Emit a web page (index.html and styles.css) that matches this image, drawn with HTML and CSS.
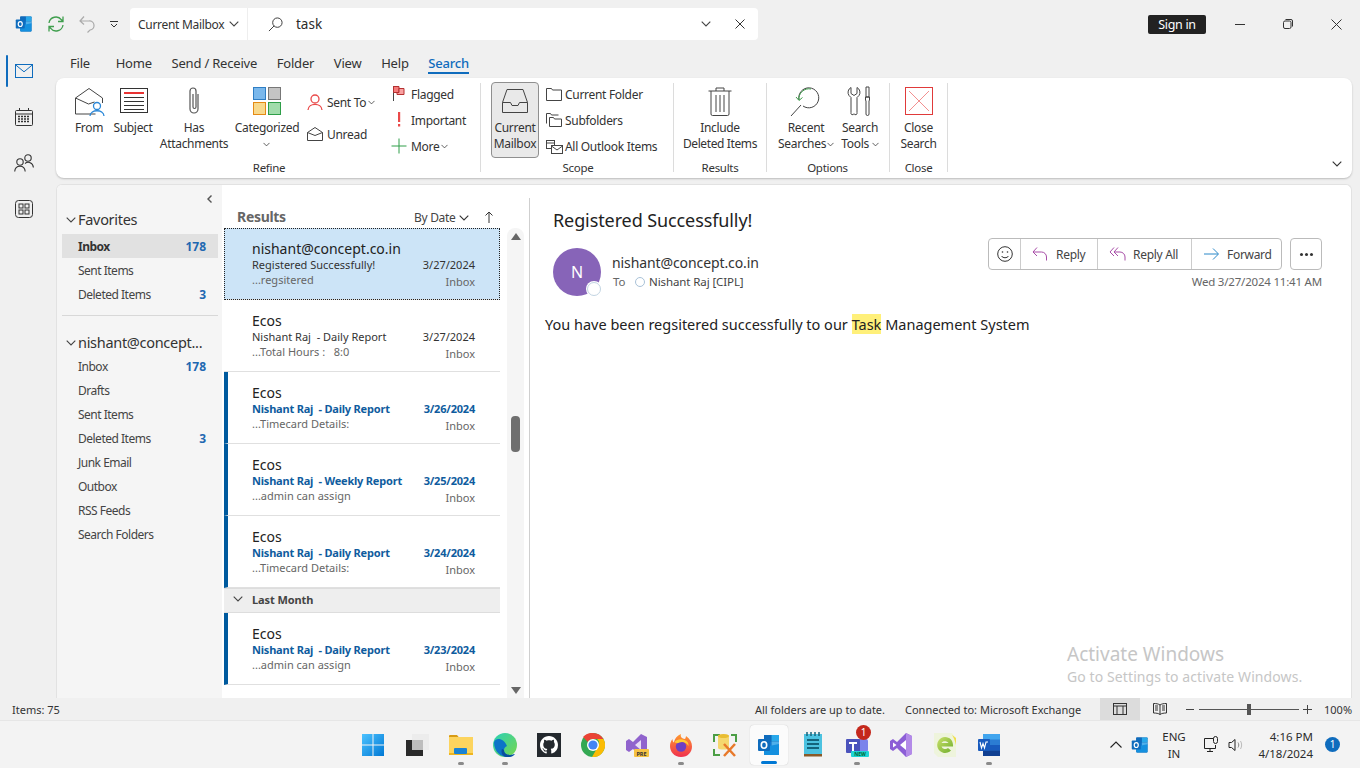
FILE: index.html
```html
<!DOCTYPE html>
<html lang="en">
<head>
<meta charset="utf-8">
<title>Outlook search</title>
<link rel="stylesheet" href="styles.css">
</head>
<body>
<svg class="sprites" aria-hidden="true">
  <symbol id="chev" viewBox="0 0 10 6"><path d="M.7.7 5 5 9.3.7" fill="none" stroke="currentColor" stroke-width="1.1"/></symbol>
  <symbol id="outlook" viewBox="0 0 24 24">
    <rect x="7" y="2" width="15" height="20" rx="1" fill="#0a5ca8"/>
    <rect x="7" y="2" width="7.5" height="6.5" fill="#0f6cbd"/><rect x="14.5" y="2" width="7.5" height="6.5" fill="#28a8ea"/>
    <rect x="7" y="8.5" width="7.5" height="6.5" fill="#0f78d4"/><rect x="14.5" y="8.5" width="7.5" height="6.5" fill="#50b0ea"/>
    <path d="M7 14 22 11v10a1 1 0 0 1-1 1H8a1 1 0 0 1-1-1z" fill="#1490df"/>
    <rect x="1" y="6" width="12" height="12" rx="1" fill="#0f6cbd"/>
    <ellipse cx="7" cy="12" rx="2.7" ry="3.3" fill="none" stroke="#fff" stroke-width="1.6"/>
  </symbol>
</svg>
<div class="app">
  <header class="titlebar">
    <svg class="t-outlook" width="18" height="18"><use href="#outlook"/></svg>
    <svg class="t-sync" width="18" height="18" viewBox="0 0 18 18" fill="none" stroke="#3f9e4d" stroke-width="1.3"><path d="M2 8a7 7 0 0 1 12.5-3.2L16 6.500M16 1.500v5h-5M16 10a7 7 0 0 1-12.500 3.200L2 11.500M2 16.500v-5h5"/></svg>
    <svg class="t-undo" width="16" height="18" viewBox="0 0 16 18" fill="none" stroke="#aaa" stroke-width="1.200"><path d="M1 6h9a4.500 4.500 0 0 1 1 9l-2.500 2.500M5 1.500 1 6l4 3.500"/></svg>
    <svg class="t-qat" width="8" height="8" viewBox="0 0 8 8" fill="none" stroke="#333"><path d="M0 1.500h8M1 4l3 3 3-3"/></svg>
    <div class="searchbox">
      <span class="scope">Current Mailbox</span>
      <svg class="ico-chev scope-chev" width="10" height="6"><use href="#chev"/></svg>
      <span class="scope-sep"></span>
      <svg class="search-mag" width="15" height="15" viewBox="0 0 16 16" fill="none" stroke="#333"><circle cx="10" cy="6" r="5"/><path d="M6.500 9.500 1 15"/></svg>
      <span class="query">task</span>
      <svg class="ico-chev query-chev" width="10" height="6"><use href="#chev"/></svg>
      <svg class="query-x" width="10" height="10" viewBox="0 0 10 10" stroke="#333" fill="none"><path d="m.5.5 9 9M9.500.5l-9 9"/></svg>
    </div>
    <span class="signin">Sign in</span>
    <div class="winctl">
      <svg width="10" height="10" viewBox="0 0 10 10" stroke="#333" fill="none"><path d="M0 5.500h10"/></svg>
      <svg width="10" height="10" viewBox="0 0 10 10" stroke="#333" fill="none"><rect x=".5" y="2" width="7.500" height="7.500" rx="1.500"/><path d="M2.500.5h5.500a1.500 1.500 0 0 1 1.500 1.500v5.500"/></svg>
      <svg width="11" height="11" viewBox="0 0 11 11" stroke="#333" fill="none"><path d="m.5.5 10 10M10.500.5l-10 10"/></svg>
    </div>
  </header>

  <div class="workspace">
    <nav class="rail">
      <div class="rail-item rail-on">
        <svg width="18" height="14" viewBox="0 0 18 14" fill="none" stroke="#0f6cbd"><rect x=".5" y=".5" width="17" height="13"/><path d="m.5.8 8.500 7 8.500-7"/></svg>
      </div>
      <div class="rail-item">
        <svg width="18" height="18" viewBox="0 0 18 18" fill="none" stroke="#333"><rect x=".5" y="2.500" width="17" height="15" rx="1"/><path d="M.5 6h17M4.500 0v3M13.500 0v3"/><path d="M3 8.500h12M3 11h12M3 13.500h12" stroke-width="1.500" stroke-dasharray="2 1"/></svg>
      </div>
      <div class="rail-item">
        <svg width="20" height="18" viewBox="0 0 20 18" fill="none" stroke="#333" stroke-width="1.100"><circle cx="6" cy="8" r="3.200"/><path d="M.7 17.500c.5-7 10-7 10.500 0"/><circle cx="14" cy="4" r="3.200"/><path d="M11 9.500c3-2.500 8-1 8.400 4"/></svg>
      </div>
      <div class="rail-item">
        <svg width="18" height="18" viewBox="0 0 18 18" fill="none" stroke="#333"><rect x=".5" y=".5" width="17" height="17" rx="3"/><rect x="4" y="4" width="4" height="4"/><rect x="10" y="4" width="4" height="4"/><rect x="4" y="10" width="4" height="4"/><rect x="10" y="10" width="4" height="4"/></svg>
      </div>
    </nav>

    <div class="main">
      <div class="tabs">
        <span class="tab tab-file">File</span><span class="tab">Home</span><span class="tab">Send / Receive</span><span class="tab">Folder</span><span class="tab">View</span><span class="tab">Help</span><span class="tab tab-on">Search</span>
      </div>

      <section class="ribbon">
        <div class="group g-refine">
          <div class="g-body">
            <div class="big b-from"><svg width="32" height="32" viewBox="0 0 32 32" fill="none" stroke="#444"><path d="M2.500 13v16h20M2.500 13 16 3.500 29.500 13v5M2.500 13l13 6 6-2"/><circle cx="24" cy="21" r="3.500" stroke="#2b88d8" stroke-width="1.300"/><path d="M17 31c.5-7 13.500-7 14 0" stroke="#2b88d8" stroke-width="1.300"/></svg><span>From</span></div>
            <div class="big b-subject"><svg width="32" height="32" viewBox="0 0 32 32" fill="none" stroke="#333"><rect x="2.500" y="3.500" width="27" height="24" fill="#fff"/><path d="M6 8h20" stroke="#e83333" stroke-width="2"/><path d="M6 12.500h20M6 16.500h20M6 20.500h20M6 24.500h20"/></svg><span>Subject</span></div>
            <div class="big b-has"><svg width="32" height="32" viewBox="0 0 32 32" fill="none" stroke="#555" stroke-width="1.200"><path d="M20 9v15a4 4 0 0 1-8 0V6a3 3 0 0 1 6 0v16a1.500 1.500 0 0 1-3 0V9"/></svg><span>Has<br>Attachments</span></div>
            <div class="big b-cat"><svg width="32" height="32" viewBox="0 0 32 32"><rect x="2.500" y="2.500" width="12" height="12" fill="#7ab8ec" stroke="#2f7ec4"/><rect x="17.500" y="2.500" width="12" height="12" fill="#c4c4c4" stroke="#777"/><rect x="2.500" y="17.500" width="12" height="12" fill="#f8d98c" stroke="#e58a14"/><rect x="17.500" y="17.500" width="12" height="12" fill="#a1dcab" stroke="#2e9e48"/></svg><span>Categorized<br><svg class="ico-s" width="7" height="5"><use href="#chev"/></svg></span></div>
            <div class="smalls s-offset">
              <div class="small"><svg class="si" width="20" height="20" viewBox="0 0 20 20" fill="none" stroke="#ea4a4a" stroke-width="1.300"><circle cx="10" cy="7" r="4"/><path d="M3 18c.5-7.500 13.500-7.500 14 0"/></svg><span>Sent To</span><svg class="ico-s" width="7" height="5"><use href="#chev"/></svg></div>
              <div class="small"><svg class="si" width="20" height="20" viewBox="0 0 20 20" fill="none" stroke="#444"><path d="M2.500 8.500v8h15v-8L10 3.500zM2.500 8.500l7.500 3 7.500-3"/></svg><span>Unread</span></div>
            </div>
            <div class="smalls s-gap">
              <div class="small"><svg class="si" width="20" height="20" viewBox="0 0 20 20" stroke="#b53030"><path d="M4.500 2v15" fill="none" stroke="#444"/><path d="M4.500 2.500h5.500v6h-5.500z" fill="#f47a7a"/><path d="M10 4.500h5v6H8v-2h2z" fill="#f9a0a0"/></svg><span>Flagged</span></div>
              <div class="small"><svg class="si" width="20" height="20" viewBox="0 0 20 20" fill="#ea4a4a"><rect x="9" y="2" width="2.200" height="10"/><rect x="9" y="14" width="2.200" height="2.500"/></svg><span>Important</span></div>
              <div class="small"><svg class="si" width="20" height="20" viewBox="0 0 20 20" stroke="#2e9e48" fill="none"><path d="M10 2.500v15M2.500 10h15"/></svg><span>More</span><svg class="ico-s" width="7" height="5"><use href="#chev"/></svg></div>
            </div>
          </div>
          <div class="g-label g-label-refine">Refine</div>
        </div>

        <div class="group g-scope">
          <div class="g-body">
            <div class="big b-mailbox"><svg width="32" height="32" viewBox="0 0 32 32" fill="none" stroke="#444"><path d="M8 4.500h16l4.500 13v10h-25v-10zM3.500 17.500h8l1.500 3h6l1.500-3h8"/></svg><span>Current<br>Mailbox</span></div>
            <div class="smalls s-gap s-scope">
              <div class="small"><svg class="si" width="18" height="18" viewBox="0 0 18 18" fill="none" stroke="#444"><path d="M1.500 15.500v-12h5l1 1.500h9v10.500z"/></svg><span>Current Folder</span></div>
              <div class="small"><svg class="si" width="18" height="18" viewBox="0 0 18 18" fill="none" stroke="#444"><path d="M1.500 12.500v-10h4l1 1.500h7M4.500 15.500v-9h4l1 1.500h7v7.500z"/></svg><span>Subfolders</span></div>
              <div class="small"><svg class="si" width="18" height="18" viewBox="0 0 18 18" fill="none" stroke="#444"><rect x="1.500" y="3.500" width="8" height="8"/><path d="M1.500 6h8"/><rect x="6.500" y="8.500" width="11" height="8" fill="#fff"/><path d="m6.500 9 5.500 4 5.500-4"/></svg><span>All Outlook Items</span></div>
            </div>
          </div>
          <div class="g-label g-label-shift">Scope</div>
        </div>

        <div class="group g-results">
          <div class="g-body">
            <div class="big b-deleted"><svg width="32" height="32" viewBox="0 0 32 32" fill="none" stroke="#444"><path d="M4.500 6h23M12 6V3h8v3M7 6v23a1.500 1.500 0 0 0 1.500 1.500h15A1.500 1.500 0 0 0 25 29V6M12 10v17M16 10v17M20 10v17"/></svg><span>Include<br>Deleted Items</span></div>
          </div>
          <div class="g-label">Results</div>
        </div>

        <div class="group g-options">
          <div class="g-body">
            <div class="big b-recent"><svg width="32" height="32" viewBox="0 0 32 32" fill="none" stroke="#444"><path d="M9 15a10 10 0 1 1 4 6"/><path d="M9 15a10 10 0 0 1 12-11" stroke="#3f9e4d"/><path d="m6 12 3 3.500 3.500-3" stroke="#3f9e4d"/><path d="M11 20 1 31"/></svg><span>Recent<br>Searches <svg class="ico-s" width="7" height="5"><use href="#chev"/></svg></span></div>
            <div class="big b-tools"><svg width="32" height="32" viewBox="0 0 32 32" fill="none" stroke="#444"><path d="M6 3.500v6l3 2 3-2v-6a5.500 5.500 0 0 1 2 8l-2 2v15a1.500 1.500 0 0 1-3 1.200 1.500 1.500 0 0 1-3-1.200v-15l-2-2a5.500 5.500 0 0 1 2-8z" transform="translate(1 -1)"/><path d="M22 2h3v10h-3zM21.500 12h4v3l-.5 1v13a1.500 1.500 0 0 1-3 0V16l-.5-1z"/></svg><span>Search<br>Tools <svg class="ico-s" width="7" height="5"><use href="#chev"/></svg></span></div>
          </div>
          <div class="g-label g-label-shift">Options</div>
        </div>

        <div class="group g-close">
          <div class="g-body">
            <div class="big b-close"><svg width="32" height="32" viewBox="0 0 32 32" fill="none"><rect x="2.500" y="2.500" width="27" height="27" stroke="#e03a3a"/><path d="m6 6 20 20M26 6 6 26" stroke="#f29090"/></svg><span>Close<br>Search</span></div>
          </div>
          <div class="g-label">Close</div>
        </div>
        <svg class="ico-chev ribbon-collapse" width="10" height="6"><use href="#chev"/></svg>
      </section>

      <div class="panes">
        <aside class="folders">
          <div class="collapse-row"><svg width="6" height="8" viewBox="0 0 6 8" fill="#555"><path d="M5 0 1 4l4 4 1-1-3-3 3-3z"/></svg></div>
          <div class="f-head f-fav"><svg class="ico-chev" width="10" height="6"><use href="#chev"/></svg><span>Favorites</span></div>
          <div class="f-row f-on"><span>Inbox</span><b>178</b></div>
          <div class="f-row"><span>Sent Items</span></div>
          <div class="f-row"><span>Deleted Items</span><b>3</b></div>
          <div class="f-sep"></div>
          <div class="f-head"><svg class="ico-chev" width="10" height="6"><use href="#chev"/></svg><span>nishant@concept...</span></div>
          <div class="f-row"><span>Inbox</span><b>178</b></div>
          <div class="f-row"><span>Drafts</span></div>
          <div class="f-row"><span>Sent Items</span></div>
          <div class="f-row"><span>Deleted Items</span><b>3</b></div>
          <div class="f-row"><span>Junk Email</span></div>
          <div class="f-row"><span>Outbox</span></div>
          <div class="f-row"><span>RSS Feeds</span></div>
          <div class="f-row"><span>Search Folders</span></div>
        </aside>

        <section class="list">
          <div class="list-col">
            <div class="list-head">
              <span class="results">Results</span>
              <span class="bydate">By Date</span>
              <svg class="ico-chev bydate-chev" width="10" height="6"><use href="#chev"/></svg>
              <svg class="sort-arrow" width="10" height="12" viewBox="0 0 10 12" fill="none" stroke="#333"><path d="M5 12V1M1.500 4.500 5 1l3.500 3.500"/></svg>
            </div>
            <article class="item selected">
              <div class="i-name">nishant@concept.co.in</div>
              <div class="i-line"><span>Registered Successfully!</span><span>3/27/2024</span></div>
              <div class="i-foot"><span>...regsitered</span><span class="i-folder">Inbox</span></div>
            </article>
            <article class="item">
              <div class="i-name">Ecos</div>
              <div class="i-line"><span>Nishant Raj&nbsp; - Daily Report</span><span>3/27/2024</span></div>
              <div class="i-foot"><span>...Total Hours :&nbsp;&nbsp; 8:0</span><span class="i-folder">Inbox</span></div>
            </article>
            <article class="item unread">
              <div class="i-name">Ecos</div>
              <div class="i-line"><span>Nishant Raj&nbsp; - Daily Report</span><span>3/26/2024</span></div>
              <div class="i-foot"><span>...Timecard Details:</span><span class="i-folder">Inbox</span></div>
            </article>
            <article class="item unread">
              <div class="i-name">Ecos</div>
              <div class="i-line"><span>Nishant Raj&nbsp; - Weekly Report</span><span>3/25/2024</span></div>
              <div class="i-foot"><span>...admin can assign</span><span class="i-folder">Inbox</span></div>
            </article>
            <article class="item unread">
              <div class="i-name">Ecos</div>
              <div class="i-line"><span>Nishant Raj&nbsp; - Daily Report</span><span>3/24/2024</span></div>
              <div class="i-foot"><span>...Timecard Details:</span><span class="i-folder">Inbox</span></div>
            </article>
            <div class="list-group"><svg class="ico-chev" width="10" height="6"><use href="#chev"/></svg><span>Last Month</span></div>
            <article class="item unread">
              <div class="i-name">Ecos</div>
              <div class="i-line"><span>Nishant Raj&nbsp; - Daily Report</span><span>3/23/2024</span></div>
              <div class="i-foot"><span>...admin can assign</span><span class="i-folder">Inbox</span></div>
            </article>
          </div>
          <div class="scroll">
            <svg width="10" height="7" viewBox="0 0 10 7" fill="#666"><path d="M5 0 10 7H0z"/></svg>
            <span class="thumb"></span>
            <svg width="10" height="7" viewBox="0 0 10 7" fill="#666"><path d="M5 7 10 0H0z"/></svg>
          </div>
          <div class="divider"></div>
        </section>

        <section class="reading">
          <h1 class="subject">Registered Successfully!</h1>
          <div class="header-row">
            <div class="avatar">N<span class="presence"></span></div>
            <div class="from-block">
              <div class="sender">nishant@concept.co.in</div>
              <div class="to"><span class="to-label">To</span><span class="to-dot"></span><span>Nishant Raj [CIPL]</span></div>
            </div>
            <div class="act-block">
              <div class="actions">
                <div class="act-group">
                  <span class="act act-emoji"><svg width="16" height="16" viewBox="0 0 16 16" fill="none" stroke="#333"><circle cx="8" cy="8" r="7.300"/><circle cx="5.500" cy="6" r=".8" fill="#333" stroke="none"/><circle cx="10.500" cy="6" r=".8" fill="#333" stroke="none"/><path d="M4.500 10c1.500 2.300 5.500 2.300 7 0"/></svg></span>
                  <span class="act act-reply"><svg width="16" height="16" viewBox="0 0 16 16" fill="none" stroke="#a74da7"><path d="M5 1.500 1 6l4 4M1 6h8.500a5 5 0 0 1 5 5v3.500"/></svg>Reply</span>
                  <span class="act act-all"><svg width="18" height="16" viewBox="0 0 18 16" fill="none" stroke="#a74da7"><path d="M5 1.500 1 6l4 4M9 1.500 5 6l4 4M5 6h6a5 5 0 0 1 5 5v3.500"/></svg>Reply All</span>
                  <span class="act act-fwd"><svg width="16" height="14" viewBox="0 0 16 14" fill="none" stroke="#2b88c8"><path d="M1 7h14M10 1.500 15.500 7 10 12.500"/></svg>Forward</span>
                </div>
                <span class="act-more"><i></i><i></i><i></i></span>
              </div>
              <div class="sent">Wed 3/27/2024 11:41 AM</div>
            </div>
          </div>
          <p class="msg">You have been regsitered successfully to our <mark>Task</mark> Management System</p>
          <div class="activate"><div class="a1">Activate Windows</div><div class="a2">Go to Settings to activate Windows.</div></div>
        </section>
      </div>
    </div>
  </div>

  <footer class="status">
    <span class="st-items">Items: 75</span>
    <span class="st-uptodate">All folders are up to date.</span>
    <span class="st-conn">Connected to: Microsoft Exchange</span>
    <span class="st-view st-view-on"><svg width="14" height="12" viewBox="0 0 14 12" fill="none" stroke="#333"><rect x=".5" y=".5" width="13" height="11"/><path d="M.5 3h13M4 3v8.500M10 3v8.500"/></svg></span>
    <span class="st-view"><svg width="14" height="12" viewBox="0 0 14 12" fill="none" stroke="#333"><path d="M7 2C5.500.8 3 .5.500.5v9.500c2.500 0 5 .3 6.500 1.500 1.500-1.200 4-1.500 6.500-1.500V.5C11 .5 8.500.8 7 2zM7 2v9.500M2 3h3M2 5h3M2 7h3M9 3h3M9 5h3M9 7h3"/></svg></span>
    <span class="z-minus"></span>
    <span class="z-track"><span class="z-thumb"></span></span>
    <span class="z-plus"></span>
    <span class="z-val">100%</span>
  </footer>

  <div class="taskbar">
    <div class="tb-apps">
      <span class="tb"><svg width="24" height="24" viewBox="0 0 24 24"><defs><linearGradient id="w1" x1="0" y1="0" x2="1" y2="1"><stop offset="0" stop-color="#4cc2ff"/><stop offset="1" stop-color="#0078d4"/></linearGradient></defs><path d="M1 1h10.500v10.500H1zM12.500 1H23v10.500H12.500zM1 12.500h10.500V23H1zM12.500 12.500H23V23H12.500z" fill="url(#w1)"/></svg></span>
      <span class="tb"><svg width="24" height="24" viewBox="0 0 24 24"><rect x="1" y="7" width="17" height="16" fill="#2a2a2a"/><rect x="7" y="1" width="17" height="16" fill="#ececec"/><rect x="7" y="7" width="11" height="10" fill="#bdbdbd"/></svg></span>
      <span class="tb tb-dot"><svg width="24" height="24" viewBox="0 0 24 24"><path d="M0 3a1 1 0 0 1 1-1h7l2 2.500H0z" fill="#d89b14"/><rect y="4" width="24" height="17" fill="#fcd45e"/><rect y="20" width="24" height="2" fill="#eeb51f"/><rect x="5" y="15" width="13" height="6" rx="1" fill="#1a83d4"/></svg></span>
      <span class="tb tb-dot"><svg width="24" height="24" viewBox="0 0 24 24"><defs><linearGradient id="e1" x1="0" y1="0" x2="1" y2="1"><stop offset="0" stop-color="#2ad1b8"/><stop offset="1" stop-color="#78d64b"/></linearGradient></defs><circle cx="12" cy="12" r="12" fill="url(#e1)"/><path d="M1 9C1 19 8 24 14 24c3 0 6-1 8-3-5 2-11 1-11-4 0-2 1-3 3-4C11 5 3 4 1 9z" fill="#0c74c8"/><path d="M11 17c0 5 6 6 11 4-2 2-3 3-6 3-5 1-9-3-7-8z" fill="#094f9e"/></svg></span>
      <span class="tb"><svg width="24" height="24" viewBox="0 0 24 24"><rect width="24" height="24" fill="#24292e"/><g transform="translate(3 3) scale(1.125)"><path fill="#fff" d="M8 0C3.580 0 0 3.580 0 8c0 3.540 2.290 6.530 5.470 7.590.4.070.55-.17.55-.38 0-.19-.01-.82-.01-1.490-2.010.37-2.530-.49-2.690-.94-.09-.23-.48-.94-.82-1.130-.28-.15-.68-.52-.01-.53.63-.01 1.080.58 1.230.82.72 1.210 1.870.87 2.330.66.070-.52.28-.87.51-1.070-1.780-.2-3.640-.89-3.640-3.950 0-.87.31-1.590.82-2.150-.08-.2-.36-1.020.08-2.120 0 0 .67-.21 2.200.82.64-.18 1.320-.27 2-.27.68 0 1.360.09 2 .27 1.530-1.040 2.200-.82 2.200-.82.44 1.100.16 1.920.08 2.120.51.56.82 1.270.82 2.150 0 3.070-1.870 3.750-3.650 3.950.29.25.54.73.54 1.480 0 1.070-.01 1.930-.01 2.200 0 .21.15.46.55.38A8.013 8.013 0 0 0 16 8c0-4.420-3.580-8-8-8z"/></g></svg></span>
      <span class="tb"><svg width="24" height="24" viewBox="0 0 24 24"><circle cx="12" cy="12" r="12" fill="#34a853"/><path d="M12 0a12 12 0 0 1 10.400 6H12a6 6 0 0 0-5.200 3L2 4a12 12 0 0 1 10-4z" fill="#ea4335"/><path d="M22.400 6A12 12 0 0 1 11 24l5.200-9a6 6 0 0 0 0-9z" fill="#fbbc04"/><circle cx="12" cy="12" r="6" fill="#fff"/><circle cx="12" cy="12" r="4.600" fill="#4285f4"/></svg></span>
      <span class="tb"><svg width="24" height="24" viewBox="0 0 24 24"><path d="M16 1 8 9 4 6 1 8v9l3 2 4-3 5 5 9-3V4z" fill="#9063cd"/><path d="M16 7v10l-6-5z" fill="#e8dcf8"/><rect x="9" y="16" width="15" height="8" rx="1" fill="#f6c343"/><text x="16.500" y="22.500" class="svg-pre">PRE</text></svg></span>
      <span class="tb tb-dot"><svg width="24" height="24" viewBox="0 0 24 24"><defs><linearGradient id="f1" x1="0" y1="0" x2="0" y2="1"><stop offset="0" stop-color="#ff9a2e"/><stop offset="1" stop-color="#f0304f"/></linearGradient></defs><path d="M12 24C5 24 1 18.500 1 13c0-3 1-5 2.500-7 0 2 .5 3 1.500 3.500C5.500 6 8 2.500 12 1c-1 3 1 4.500 4 5 0 0 1-1.500 1-3 4 2.500 6 6.500 6 10.500C23 19 19 24 12 24z" fill="url(#f1)"/><circle cx="12" cy="13.500" r="5.200" fill="#6d3fc4"/><path d="M5.500 9C8 5.500 15 5 18.500 9c1 1.500 1 3 1 4-2-3.500-6-5-9-3.500-2 1-3 1-5-.5z" fill="#ffcc33"/></svg></span>
      <span class="tb"><svg width="24" height="24" viewBox="0 0 24 24"><path d="M1 9V2h6M23 9V2h-5M1 16v6h6" fill="none" stroke="#4b9e45" stroke-width="2"/><path d="M5 3c0-2 11-2 11 0v12c0 2-11 2-11 0z" fill="#f5d76e"/><ellipse cx="10.500" cy="3" rx="5.500" ry="2" fill="#e9bd32"/><path d="m11 11 11 12M22 11 11 23" stroke="#e8792b" stroke-width="2.500"/></svg></span>
      <span class="tb tb-active"><svg width="24" height="24"><use href="#outlook"/></svg><i></i></span>
      <span class="tb"><svg width="24" height="26" viewBox="0 0 24 26"><rect x="3" y="2" width="18" height="21" fill="#4cc2e0"/><path d="M6 0v4M10 0v4M14 0v4M18 0v4" stroke="#14647c" stroke-width="1.500"/><path d="M6 8h12M6 12h12M6 16h12" stroke="#14647c" stroke-width="2"/><rect x="3" y="22" width="18" height="2.500" fill="#8a5a28"/></svg></span>
      <span class="tb tb-dot tb-teams"><svg width="24" height="24" viewBox="0 0 24 24"><rect x="12" y="6" width="11" height="13" rx="2" fill="#7b83eb"/><circle cx="18" cy="4" r="2.500" fill="#7b83eb"/><rect x="1" y="6" width="14" height="14" rx="1" fill="#4b53bc"/><path d="M4 9h8v2H9v7H7v-7H4z" fill="#fff"/><rect x="6" y="18" width="18" height="6" rx="1" fill="#1fd5d5"/><text x="15" y="23" class="svg-new">NEW</text></svg><span class="badge">1</span></span>
      <span class="tb"><svg width="24" height="24" viewBox="0 0 24 24"><path d="M17 0 8 9 4 6 1 8v8l3 2 4-3 9 9 6-3V3z" fill="#8c5ed6"/><path d="M17 7v10l-6-5z" fill="#fff"/><path d="M4 9.500 7.500 12 4 14.500z" fill="#fff"/><path d="M17 0v24l6-3V3z" fill="#b38ae8"/></svg></span>
      <span class="tb"><svg width="24" height="24" viewBox="0 0 24 24"><defs><linearGradient id="e2" x1="0" y1="0" x2="1" y2="1"><stop offset="0" stop-color="#c9e06a"/><stop offset="1" stop-color="#6fae2c"/></linearGradient></defs><path d="M1 0h18l4 5v19H5l-4-4z" fill="#eef4dc"/><path d="M12 4a8 8 0 1 0 6 13.500l-3-2.500a4 4 0 0 1-6.500-1.500H20c.5-5.500-3-9.500-8-9.500zM8.500 10c1-2.500 5.500-2.500 7 0z" fill="url(#e2)"/><path d="M19 2l4 3v7c-1-4-2-7-4-10z" fill="#f0df4a"/></svg></span>
      <span class="tb tb-dot"><svg width="24" height="24" viewBox="0 0 24 24"><rect x="6" y="1" width="17" height="22" rx="1" fill="#2b7cd3"/><rect x="6" y="1" width="17" height="5.500" fill="#41a5ee"/><rect x="6" y="12" width="17" height="5.500" fill="#185abd"/><rect x="6" y="17.500" width="17" height="5.500" fill="#103f91"/><rect x="1" y="6" width="12" height="12" rx="1" fill="#185abd"/><path d="m3 9 1.500 6 1.500-4.500L7.500 15 9 9 11 9" fill="none" stroke="#fff" stroke-width="1.100"/></svg></span>
    </div>
    <div class="tray">
      <svg class="tr-up" width="12" height="7" viewBox="0 0 12 7" fill="none" stroke="#222" stroke-width="1.100"><path d="M.5 6.500 6 1l5.500 5.500"/></svg>
      <svg class="tr-out" width="18" height="18"><use href="#outlook"/></svg>
      <span class="tr-lang">ENG<br>IN</span>
      <svg class="tr-net" width="16" height="18" viewBox="0 0 16 18" fill="none" stroke="#222"><path d="M9.500 2.500h-9v10h11V9M3 15.500h6M6 12.500v3"/><rect x="9.500" y=".5" width="4" height="7" rx="2"/></svg>
      <svg class="tr-vol" width="16" height="14" viewBox="0 0 16 14" fill="none" stroke="#222"><path d="M1 4.500h2.500L7 1.500v11l-3.500-3H1z"/><path d="M10 4.500c1 1.500 1 3.500 0 5" stroke="#888"/><path d="M12.500 3c1.500 2.500 1.500 5.500 0 8" stroke="#bbb"/></svg>
      <span class="tr-time">4:16 PM<br>4/18/2024</span>
      <span class="tr-note">1</span>
    </div>
  </div>
</div>
</body>
</html>
```
FILE: styles.css
```css
* { box-sizing: border-box; }
html, body { margin: 0; padding: 0; }
body { width: 1360px; height: 768px; overflow: hidden; font-family: "Noto Sans", "Liberation Sans", sans-serif; font-size: 12px; color: #2b2b2b; letter-spacing: -.3px; }
.sprites { display: none; }
svg { display: block; flex: none; }
.app { position: relative; width: 1360px; height: 768px; display: flex; flex-direction: column; background: #f0f0f0; }

/* title bar */
.titlebar { height: 48px; display: flex; align-items: center; flex: none; }
.t-outlook { margin-left: 15px; }
.t-sync { margin-left: 14px; }
.t-undo { margin-left: 14px; }
.t-qat { margin-left: 15px; }
.searchbox { margin-left: 12px; width: 628px; height: 32px; background: #fff; border-radius: 4px; display: flex; align-items: center; }
.scope { margin-left: 8px; color: #333; width: 89px; }
.scope-chev { margin-left: 2px; color: #333; }
.scope-sep { width: 1px; height: 32px; background: #eee; margin-left: 8px; }
.search-mag { margin-left: 20px; }
.query { margin-left: 13px; font-size: 13.500px; letter-spacing: 0; width: 120px; }
.query-chev { margin-left: 285px; color: #333; }
.query-x { margin-left: 24px; }
.signin { margin-left: 390px; width: 58px; height: 19px; line-height: 19px; text-align: center; background: #222; color: #fff; border-radius: 2px; font-size: 12.500px; }
.winctl { margin-left: 29px; display: flex; gap: 38px; align-items: center; }

/* workspace */
.workspace { height: 650px; display: flex; flex: none; }
.rail { width: 56px; flex: none; display: flex; flex-direction: column; padding-top: 5px; }
.rail-item { height: 46px; display: flex; align-items: center; justify-content: center; padding-left: 0; width: 48px; }
.rail-on { position: relative; height: 36px; margin-bottom: 5px; margin-top: 0; }
.rail-on::before { content: ""; position: absolute; left: 6px; top: 2px; width: 2px; height: 32px; background: #0f6cbd; border-radius: 1px; }
.main { flex: 1; display: flex; flex-direction: column; padding-right: 8px; min-width: 0; }

/* tabs */
.tabs { height: 30px; display: flex; gap: 19.67px; padding-left: 14px; flex: none; }
.tab { height: 26px; line-height: 30px; font-size: 13px; color: #333; letter-spacing: -.2px; }
.tab-file { margin-right: 6px; }
.tab-on { color: #0f6cbd; font-weight: 500; box-shadow: inset 0 -2px 0 #0f6cbd; }

/* ribbon */
.ribbon { height: 100px; background: #fff; border-radius: 8px; box-shadow: 0 1px 2px rgba(0,0,0,.22); display: flex; flex: none; align-items: flex-start; }
.group { height: 89px; margin-top: 5px; border-right: 1px solid #dcdcdc; flex: none; }
.g-body { height: 77px; display: flex; }
.g-label { height: 16px; line-height: 16px; text-align: center; font-size: 11.500px; color: #333; }
.g-label-refine { padding-right: 14px; }
.g-label-shift { padding-right: 8px; }
.g-refine { width: 425px; padding-left: 16px; }
.g-scope { width: 193px; padding-left: 10px; }
.g-results { width: 93px; }
.g-options { width: 123px; padding-left: 7px; }
.g-close { width: 58px; }
.big { display: flex; flex-direction: column; align-items: center; text-align: center; line-height: 16px; padding-top: 2px; flex: none; color: #333; }
.big > svg { margin-bottom: 3px; }
.big .ico-s { display: inline-block; vertical-align: 1px; }
.b-from { width: 34px; }
.b-subject { width: 44px; margin-left: 5px; }
.b-subject > svg { margin-left: 2px; }
.b-has { width: 74px; margin-left: 2px; }
.b-cat { width: 68px; margin-left: 2px; }
.b-mailbox { width: 48px; height: 76px; margin-top: -1px; background: #e9e9e9; border: 1px solid #8f8f8f; border-radius: 4px; padding-top: 2px; }
.b-deleted { width: 92px; letter-spacing: -.38px; }
.b-recent { width: 64px; }
.b-recent .ico-s { margin-left: -2px; }
.b-tools { width: 44px; }
.b-close { width: 57px; }
.smalls { display: flex; flex-direction: column; flex: none; }
.s-offset { margin-left: 4px; width: 84px; padding-top: 8px; gap: 10px; }
.s-gap { gap: 4px; }
.s-scope { margin-left: 6px; }
.small { height: 22px; display: flex; align-items: center; gap: 2px; color: #333; white-space: nowrap; }
.small .ico-s { margin-left: 0; }
.ico-chev { color: #444; }
.ribbon-collapse { margin-left: auto; margin-right: 10px; margin-top: 83px; color: #333; }

/* panes */
.panes { height: 514px; margin-top: 6px; display: flex; background: #fff; border-radius: 6px 6px 0 0; border: 1px solid #e2e2e2; border-bottom: 0; flex: none; overflow: hidden; }
.folders { width: 165px; flex: none; background: #f5f5f5; padding: 5px 4px 0 5px; }
.collapse-row { height: 17px; display: flex; justify-content: flex-end; align-items: center; padding-right: 6px; }
.f-head { height: 24px; display: flex; align-items: center; font-size: 14.500px; color: #333; white-space: nowrap; }
.f-head .ico-chev { margin: 1px 2px 0 4px; }
.f-fav { margin-bottom: 3px; }
.f-row { height: 24px; display: flex; justify-content: space-between; align-items: center; padding: 0 12px 0 16px; color: #444; letter-spacing: -.5px; }
.f-row b { color: #1f68b1; font-weight: 700; letter-spacing: 0; }
.f-on { background: #e1e1e1; }
.f-on span { font-weight: 700; color: #333; }
.f-sep { height: 1px; background: #d8d8d8; margin: 9px 0 14px; }

.list { width: 308px; flex: none; display: flex; }
.list-col { width: 276px; flex: none; margin-left: 2px; }
.list-head { height: 43px; display: flex; align-items: flex-end; padding: 0 0 1px 13px; }
.results { font-size: 14px; font-weight: 700; color: #666; width: 177px; line-height: 20px; }
.bydate { line-height: 18px; color: #444; width: 45px; }
.bydate-chev { margin: 0 0 6px 0; color: #333; }
.sort-arrow { margin: 0 0 4px 15px; }
.item { height: 72px; padding: 12px 25px 0 28px; border-bottom: 1px solid #e0e0e0; }
.i-name { font-size: 14px; line-height: 18px; color: #222; letter-spacing: 0; }
.i-line { display: flex; justify-content: space-between; font-size: 11px; line-height: 15px; margin-top: -1px; color: #333; letter-spacing: 0; }
.i-foot { display: flex; justify-content: space-between; align-items: flex-start; font-size: 11px; line-height: 14px; margin-top: 1px; color: #666; letter-spacing: 0; }
.i-folder { line-height: 18px; }
.selected { background: #cce4f7; outline: 1px dotted #222; outline-offset: -1px; }
.unread { border-left: 4px solid #005a9e; padding-left: 24px; }
.unread .i-line { color: #0f5c9e; font-weight: 700; letter-spacing: -.2px; }
.list-group { height: 25px; display: flex; align-items: center; background: #eee; border-top: 1px solid #ddd; border-bottom: 1px solid #ddd; font-size: 11px; font-weight: 700; color: #444; padding: 0 0 3px 9px; letter-spacing: -.1px; }
.list-group .ico-chev { margin-right: 9px; }
.scroll { width: 17px; margin: 43px 0 0 7px; background: #f5f5f5; border-radius: 8px 8px 0 0; display: flex; flex-direction: column; align-items: center; padding: 5px 0 4px; flex: none; }
.thumb { width: 9px; height: 36px; background: #6f6f6f; border-radius: 4px; margin: 176px 0 0; }
.scroll svg:last-child { margin-top: auto; }
.divider { width: 1px; margin: 13px 0 0 5px; background: #cfcfcf; flex: none; }

/* reading */
.reading { flex: 1; min-width: 0; padding: 0 29px 0 15px; }
.subject { margin: 23px 0 0 8px; font-size: 18px; line-height: 24px; font-weight: 400; color: #222; letter-spacing: -.1px; }
.header-row { display: flex; margin: 6px 0 0 8px; }
.avatar { position: relative; width: 48px; height: 48px; margin-top: 10px; border-radius: 50%; background: #8764b8; color: #fff; font-size: 16px; line-height: 48px; text-align: center; flex: none; }
.presence { position: absolute; right: 0; bottom: 0; width: 14px; height: 14px; border-radius: 50%; background: #fff; border: 1.500px solid #c2d4e2; box-shadow: 0 0 0 1px #fff; }
.from-block { margin: 16px 0 0 11px; flex: none; }
.sender { font-size: 14px; line-height: 18px; color: #333; letter-spacing: -.1px; }
.to { display: flex; align-items: center; margin: 1px 0 0 1px; font-size: 11.500px; color: #444; line-height: 18px; letter-spacing: -.1px; }
.to-label { color: #666; width: 22px; }
.to-dot { width: 10px; height: 10px; border: 1px solid #a9c2d8; border-radius: 50%; margin: 0 4px 0 0; }
.act-block { margin-left: auto; display: flex; flex-direction: column; align-items: flex-end; }
.actions { display: flex; gap: 8px; }
.act-group { display: flex; height: 32px; background: #fff; border: 1px solid #bbb; border-radius: 4px; }
.act { display: flex; align-items: center; border-right: 1px solid #ccc; font-size: 12px; color: #444; height: 30px; }
.act:last-child { border-right: 0; }
.act-emoji { width: 32px; justify-content: center; }
.act-reply { width: 77px; padding-left: 11px; gap: 8px; }
.act-all { width: 94px; padding-left: 11px; gap: 6px; }
.act-fwd { width: 89px; padding-left: 11px; gap: 8px; }
.act-more { width: 32px; height: 32px; border: 1px solid #bbb; border-radius: 4px; display: flex; align-items: center; justify-content: center; gap: 2px; }
.act-more i { width: 3px; height: 3px; background: #333; border-radius: 50%; }
.sent { margin-top: 3px; line-height: 18px; color: #666; font-size: 11.500px; letter-spacing: -.2px; }
.msg { margin: 18px 0 0; font-size: 14.500px; line-height: 20px; color: #222; letter-spacing: 0; white-space: nowrap; }
.msg mark { background: #fff07a; color: inherit; }
.activate { position: absolute; left: 1067px; top: 642px; color: #c6c6c6; white-space: nowrap; letter-spacing: 0; }
.a1 { font-size: 19px; line-height: 25px; }
.a2 { font-size: 14px; line-height: 20px; letter-spacing: .1px; }

/* status */
.status { height: 22px; display: flex; align-items: center; flex: none; font-size: 11px; color: #333; background: #f0f0f0; letter-spacing: 0; }
.st-items { margin-left: 12px; width: 743px; }
.st-uptodate { width: 150px; }
.st-conn { width: 195px; }
.st-view { width: 40px; height: 22px; display: flex; align-items: center; justify-content: center; }
.st-view-on { background: #dcdcdc; }
.z-minus { width: 8px; height: 1px; background: #444; margin-left: 6px; }
.z-track { position: relative; width: 100px; height: 1px; background: #555; margin-left: 5px; }
.z-thumb { position: absolute; left: 48px; top: -5px; width: 4px; height: 11px; background: #555; }
.z-plus { position: relative; width: 9px; height: 1px; background: #444; margin-left: 4px; }
.z-plus::after { content: ""; position: absolute; left: 4px; top: -4px; width: 1px; height: 9px; background: #444; }
.z-val { margin-left: 12px; }

/* taskbar */
.taskbar { height: 48px; flex: none; background: #f3f3f3; border-top: 1px solid #e6e6e6; display: flex; align-items: center; letter-spacing: 0; }
.tb-apps { margin-left: 351px; display: flex; width: 660px; }
.tb { position: relative; width: 44px; height: 40px; display: flex; align-items: center; justify-content: center; flex: none; }
.tb-dot::after { content: ""; position: absolute; left: 19px; bottom: 0; width: 6px; height: 3px; border-radius: 2px; background: #8a8a8a; }
.tb-active { background: #fbfbfb; border-radius: 4px; box-shadow: 0 0 1px rgba(0,0,0,.25); width: 38px; margin: 0 3px; }
.tb-active i { position: absolute; left: 11px; bottom: 1px; width: 16px; height: 3px; border-radius: 2px; background: #0078d4; }
.badge { position: absolute; left: 21px; top: 0; width: 15px; height: 15px; border-radius: 50%; background: #c4281c; color: #fff; font-size: 10px; line-height: 15px; text-align: center; }
.svg-pre { font: 700 5.500px "Noto Sans", sans-serif; fill: #333; text-anchor: middle; }
.svg-new { font: 700 5px "Noto Sans", sans-serif; fill: #063; text-anchor: middle; }
.tray { display: flex; align-items: center; flex: none; }
.tr-up { margin-left: 99px; }
.tr-out { margin-left: 9px; }
.tr-lang { width: 40px; margin-left: 5px; text-align: center; font-size: 11.500px; line-height: 17px; }
.tr-net { margin-left: 10px; }
.tr-vol { margin-left: 8px; }
.tr-time { width: 69px; margin-left: 0; text-align: right; font-size: 11.500px; line-height: 17px; }
.tr-note { width: 15px; height: 15px; margin-left: 12px; border-radius: 50%; background: #0f6cbd; color: #fff; font-size: 10px; line-height: 15px; text-align: center; }
```
